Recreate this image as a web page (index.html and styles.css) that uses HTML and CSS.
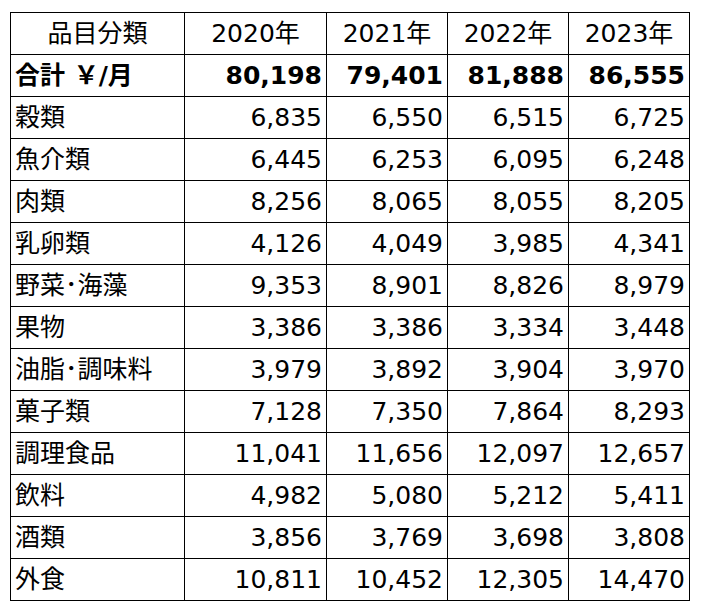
FILE: index.html
```html
<!DOCTYPE html>
<html lang="ja">
<head>
<meta charset="utf-8">
<title>品目分類</title>
<link rel="stylesheet" href="styles.css">
</head>
<body>
<div class="sheet">
  <div class="grid">
    <div class="cell head">品目分類</div>
    <div class="cell head">2020年</div>
    <div class="cell head">2021年</div>
    <div class="cell head">2022年</div>
    <div class="cell head">2023年</div>

    <div class="cell label bold">合計 ￥/月</div>
    <div class="cell num bold">80,198</div>
    <div class="cell num bold">79,401</div>
    <div class="cell num bold">81,888</div>
    <div class="cell num bold">86,555</div>

    <div class="cell label">穀類</div>
    <div class="cell num">6,835</div>
    <div class="cell num">6,550</div>
    <div class="cell num">6,515</div>
    <div class="cell num">6,725</div>

    <div class="cell label">魚介類</div>
    <div class="cell num">6,445</div>
    <div class="cell num">6,253</div>
    <div class="cell num">6,095</div>
    <div class="cell num">6,248</div>

    <div class="cell label">肉類</div>
    <div class="cell num">8,256</div>
    <div class="cell num">8,065</div>
    <div class="cell num">8,055</div>
    <div class="cell num">8,205</div>

    <div class="cell label">乳卵類</div>
    <div class="cell num">4,126</div>
    <div class="cell num">4,049</div>
    <div class="cell num">3,985</div>
    <div class="cell num">4,341</div>

    <div class="cell label">野菜･海藻</div>
    <div class="cell num">9,353</div>
    <div class="cell num">8,901</div>
    <div class="cell num">8,826</div>
    <div class="cell num">8,979</div>

    <div class="cell label">果物</div>
    <div class="cell num">3,386</div>
    <div class="cell num">3,386</div>
    <div class="cell num">3,334</div>
    <div class="cell num">3,448</div>

    <div class="cell label">油脂･調味料</div>
    <div class="cell num">3,979</div>
    <div class="cell num">3,892</div>
    <div class="cell num">3,904</div>
    <div class="cell num">3,970</div>

    <div class="cell label">菓子類</div>
    <div class="cell num">7,128</div>
    <div class="cell num">7,350</div>
    <div class="cell num">7,864</div>
    <div class="cell num">8,293</div>

    <div class="cell label">調理食品</div>
    <div class="cell num">11,041</div>
    <div class="cell num">11,656</div>
    <div class="cell num">12,097</div>
    <div class="cell num">12,657</div>

    <div class="cell label">飲料</div>
    <div class="cell num">4,982</div>
    <div class="cell num">5,080</div>
    <div class="cell num">5,212</div>
    <div class="cell num">5,411</div>

    <div class="cell label">酒類</div>
    <div class="cell num">3,856</div>
    <div class="cell num">3,769</div>
    <div class="cell num">3,698</div>
    <div class="cell num">3,808</div>

    <div class="cell label">外食</div>
    <div class="cell num">10,811</div>
    <div class="cell num">10,452</div>
    <div class="cell num">12,305</div>
    <div class="cell num">14,470</div>
  </div>
</div>
</body>
</html>
```

FILE: styles.css
```css
html, body {
  margin: 0;
  padding: 0;
  background: #ffffff;
}

.sheet {
  padding: 12px 0 0 10px;
}

.grid {
  display: grid;
  grid-template-columns: 174px 142px 121px 121px 121px;
  grid-auto-rows: 42px;
  width: max-content;
  border-left: 1px solid #000;
  border-top: 1px solid #000;
  font-family: "DejaVu Sans", "Noto Sans CJK JP", sans-serif;
  font-size: 25px;
  color: #000;
}

.cell {
  display: flex;
  align-items: center;
  border-right: 1px solid #000;
  border-bottom: 1px solid #000;
  white-space: nowrap;
  overflow: hidden;
  line-height: 1;
}

.head {
  justify-content: center;
}

.label {
  justify-content: flex-start;
  padding-left: 4px;
}

.num {
  justify-content: flex-end;
  padding-right: 4px;
}

.bold {
  font-weight: bold;
}
```
